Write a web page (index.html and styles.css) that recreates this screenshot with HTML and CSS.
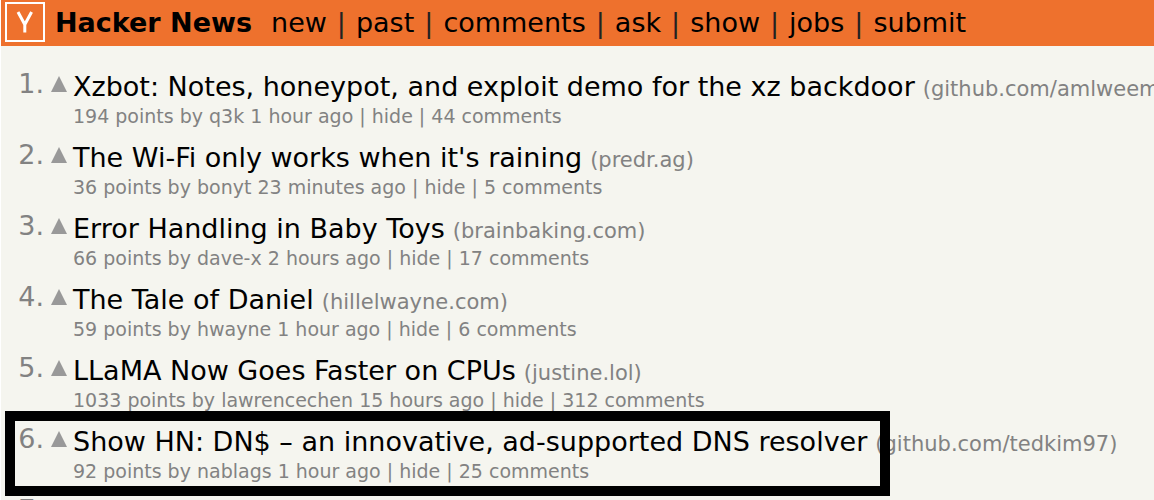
FILE: index.html
```html
<!DOCTYPE html>
<html lang="en">
<head>
<meta charset="utf-8">
<title>Hacker News</title>
<link rel="stylesheet" href="styles.css">
</head>
<body>
<div class="page">
  <header class="topbar">
    <a class="logo" href="#" aria-label="Home">
      <svg viewBox="0 0 40 40" width="40" height="40" aria-hidden="true">
        <rect x="1" y="1" width="38" height="38" fill="none" stroke="#fff" stroke-width="2"/>
        <path d="M13 10 L19.8 22.5 L26.6 10 M19.8 21.5 V30.5" fill="none" stroke="#fff" stroke-width="3"/>
      </svg>
    </a>
    <a class="brand" href="#">Hacker News</a>
    <nav class="menu"><a href="#">new</a><span>|</span><a href="#">past</a><span>|</span><a href="#">comments</a><span>|</span><a href="#">ask</a><span>|</span><a href="#">show</a><span>|</span><a href="#">jobs</a><span>|</span><a href="#">submit</a></nav>
  </header>
  <main class="stories">
    <article class="story">
      <span class="rank">1.</span>
      <button class="vote" aria-label="upvote"></button>
      <div class="body">
        <div class="headline"><a class="title" href="#">Xzbot: Notes, honeypot, and exploit demo for the xz backdoor</a><span class="site">(<a href="#">github.com/amlweems</a>)</span></div>
        <div class="meta">194 points by <a href="#">q3k</a> <a href="#">1 hour ago</a> | <a href="#">hide</a> | <a href="#">44 comments</a></div>
      </div>
    </article>
    <article class="story">
      <span class="rank">2.</span>
      <button class="vote" aria-label="upvote"></button>
      <div class="body">
        <div class="headline"><a class="title" href="#">The Wi-Fi only works when it's raining</a><span class="site">(<a href="#">predr.ag</a>)</span></div>
        <div class="meta">36 points by <a href="#">bonyt</a> <a href="#">23 minutes ago</a> | <a href="#">hide</a> | <a href="#">5 comments</a></div>
      </div>
    </article>
    <article class="story">
      <span class="rank">3.</span>
      <button class="vote" aria-label="upvote"></button>
      <div class="body">
        <div class="headline"><a class="title" href="#">Error Handling in Baby Toys</a><span class="site">(<a href="#">brainbaking.com</a>)</span></div>
        <div class="meta">66 points by <a href="#">dave-x</a> <a href="#">2 hours ago</a> | <a href="#">hide</a> | <a href="#">17 comments</a></div>
      </div>
    </article>
    <article class="story">
      <span class="rank">4.</span>
      <button class="vote" aria-label="upvote"></button>
      <div class="body">
        <div class="headline"><a class="title" href="#">The Tale of Daniel</a><span class="site">(<a href="#">hillelwayne.com</a>)</span></div>
        <div class="meta">59 points by <a href="#">hwayne</a> <a href="#">1 hour ago</a> | <a href="#">hide</a> | <a href="#">6 comments</a></div>
      </div>
    </article>
    <article class="story">
      <span class="rank">5.</span>
      <button class="vote" aria-label="upvote"></button>
      <div class="body">
        <div class="headline"><a class="title" href="#">LLaMA Now Goes Faster on CPUs</a><span class="site">(<a href="#">justine.lol</a>)</span></div>
        <div class="meta">1033 points by <a href="#">lawrencechen</a> <a href="#">15 hours ago</a> | <a href="#">hide</a> | <a href="#">312 comments</a></div>
      </div>
    </article>
    <article class="story">
      <span class="rank">6.</span>
      <button class="vote" aria-label="upvote"></button>
      <div class="body">
        <div class="headline"><a class="title" href="#">Show HN: DN$ – an innovative, ad-supported DNS resolver</a><span class="site">(<a href="#">github.com/tedkim97</a>)</span></div>
        <div class="meta">92 points by <a href="#">nablags</a> <a href="#">1 hour ago</a> | <a href="#">hide</a> | <a href="#">25 comments</a></div>
      </div>
      <div class="highlight"></div>
    </article>
    <article class="story">
      <span class="rank">7.</span>
    </article>
  </main>
</div>
</body>
</html>
```
FILE: styles.css
```css
body {
  margin: 0;
  height: 100vh;
  overflow: hidden;
  background: #fff;
  font-family: Verdana, "DejaVu Sans", sans-serif;
  font-size: 27px;
  line-height: 32px;
  white-space: nowrap;
}

a {
  color: inherit;
  text-decoration: none;
}

.page {
  min-height: 100%;
  margin-left: 1px;
  background: #f5f5ef;
}

.topbar {
  display: flex;
  align-items: center;
  height: 46px;
  padding-left: 4px;
  background: #ee712d;
  color: #222;
}

.logo {
  display: flex;
  margin-right: 10px;
  margin-bottom: 2px;
}

.brand {
  margin-right: 19px;
  color: #000;
  font-weight: bold;
}

.menu {
  display: flex;
  gap: 10px;
}

.menu a {
  color: #000;
}

.stories {
  padding-top: 25px;
}

.story {
  position: relative;
  display: grid;
  grid-template-columns: 43px 29px 1fr;
  height: 71px;
  color: #828282;
}

.rank {
  margin-top: -3px;
  text-align: right;
}

.vote {
  width: 16px;
  height: 16px;
  margin: 5px 0 0 7px;
  padding: 0;
  border: 0;
  background: #999;
  clip-path: polygon(50% 0, 100% 100%, 0 100%);
}

.headline {
  display: flex;
  align-items: baseline;
  gap: 8px;
  height: 32px;
}

.title {
  color: #000;
}

.site {
  font-size: 21px;
}

.meta {
  font-size: 19px;
  line-height: 26px;
}

.highlight {
  position: absolute;
  top: -15px;
  left: 4px;
  box-sizing: border-box;
  width: 885px;
  height: 85px;
  border: 10px solid #000;
  pointer-events: none;
}
```
